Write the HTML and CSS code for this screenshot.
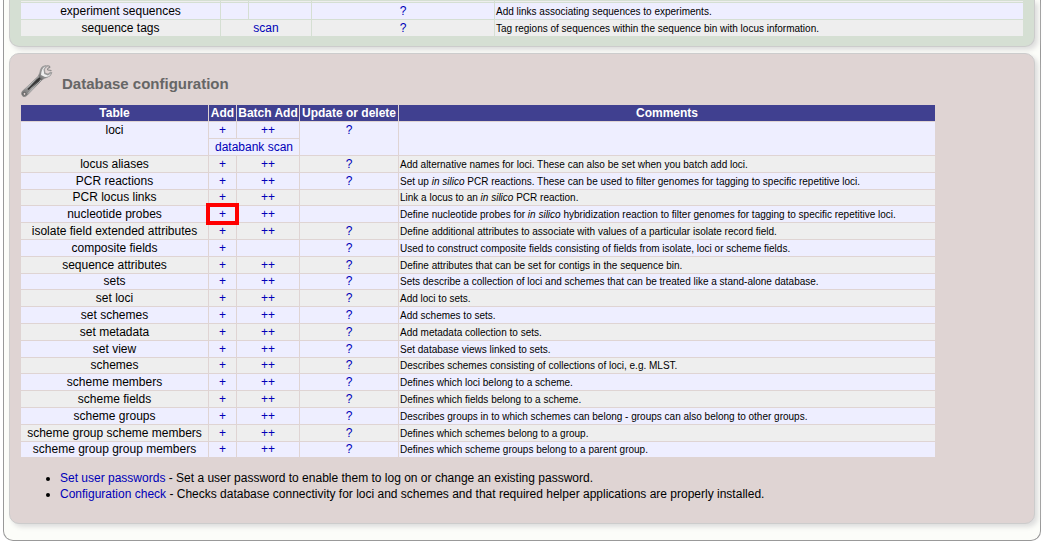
FILE: index.html
```
<!DOCTYPE html>
<html lang="en">
<head>
<meta charset="utf-8">
<title>Database curation</title>
<link rel="stylesheet" href="styles.css">
</head>
<body>
<main class="page">
<section class="panel sequences">
<table class="data full">
<colgroup><col class="c-name-wide"><col class="c-add"><col class="c-batch"><col class="c-update-wide"><col></colgroup>
<tbody>
<tr class="cut"><td></td><td></td><td></td><td></td><td></td></tr>
<tr class="alt"><td>experiment sequences</td><td></td><td></td><td><a href="#">?</a></td><td class="comment">Add links associating sequences to experiments.</td></tr>
<tr><td>sequence tags</td><td colspan="2"><a href="#">scan</a></td><td><a href="#">?</a></td><td class="comment">Tag regions of sequences within the sequence bin with locus information.</td></tr>
</tbody>
</table>
</section>
<section class="panel config">
<header class="heading">
<svg class="wrench" viewBox="0 0 32 34" aria-hidden="true">
<defs><linearGradient id="steel" gradientUnits="userSpaceOnUse" x1="2" y1="31" x2="28" y2="4"><stop offset="0" stop-color="#777"/><stop offset=".3" stop-color="#999"/><stop offset=".55" stop-color="#444"/><stop offset=".7" stop-color="#888"/><stop offset="1" stop-color="#aaa"/></linearGradient></defs>
<path d="M1 27.500L17 12.500Q19 9 19.500 5.500Q20.500 1.800 25 1.500L26 2.500L23.500 5L24 9L27 10L29.500 8L31 8.500Q30 12.500 26 13.500Q23 14 21 16L6.500 31Q4.500 33.500 2 32.500Q-.5 30 1 27.500Z" fill="url(#steel)" stroke="#888" stroke-width=".5"/>
<path d="M20 11Q20.500 4 24.500 2.200L22.500 5.500L23.300 10L27 11.500L30 9.500Q28.500 13 24 13Z" fill="#eee"/>
<path d="M25.500 1.800L28.500 2L29 3.500L27 4L26.500 6L30.500 6.500" fill="none" stroke="#888" stroke-width="1"/>
<path d="M7 25.500L19 14" stroke="#333" stroke-width="1.600"/>
<path d="M4.500 25L18 12.500" stroke="#bbb" stroke-width="1"/>
<path d="M7 29.500L20 16" stroke="#ccc" stroke-width=".8"/>
<circle cx="3.500" cy="29.900" r="1.500" fill="#dfd4d3" stroke="#555" stroke-width=".8"/>
</svg>
<h2>Database configuration</h2>
</header>
<table class="data">
<colgroup><col class="c-name"><col class="c-add"><col class="c-batch"><col class="c-update"><col class="c-comments"></colgroup>
<thead><tr><th>Table</th><th>Add</th><th>Batch Add</th><th>Update or delete</th><th>Comments</th></tr></thead>
<tbody>
<tr class="alt"><td rowspan="2">loci</td><td><a href="#">+</a></td><td><a href="#">++</a></td><td rowspan="2"><a href="#">?</a></td><td rowspan="2" class="comment"></td></tr>
<tr class="alt"><td colspan="2"><a href="#">databank scan</a></td></tr>
<tr><td>locus aliases</td><td><a href="#">+</a></td><td><a href="#">++</a></td><td><a href="#">?</a></td><td class="comment">Add alternative names for loci. These can also be set when you batch add loci.</td></tr>
<tr class="alt"><td>PCR reactions</td><td><a href="#">+</a></td><td><a href="#">++</a></td><td><a href="#">?</a></td><td class="comment">Set up <i>in silico</i> PCR reactions. These can be used to filter genomes for tagging to specific repetitive loci.</td></tr>
<tr><td>PCR locus links</td><td><a href="#">+</a></td><td><a href="#">++</a></td><td></td><td class="comment">Link a locus to an <i>in silico</i> PCR reaction.</td></tr>
<tr class="alt"><td>nucleotide probes</td><td class="marked"><a href="#">+</a></td><td><a href="#">++</a></td><td></td><td class="comment">Define nucleotide probes for <i>in silico</i> hybridization reaction to filter genomes for tagging to specific repetitive loci.</td></tr>
<tr><td>isolate field extended attributes</td><td><a href="#">+</a></td><td><a href="#">++</a></td><td><a href="#">?</a></td><td class="comment">Define additional attributes to associate with values of a particular isolate record field.</td></tr>
<tr class="alt"><td>composite fields</td><td><a href="#">+</a></td><td></td><td><a href="#">?</a></td><td class="comment">Used to construct composite fields consisting of fields from isolate, loci or scheme fields.</td></tr>
<tr><td>sequence attributes</td><td><a href="#">+</a></td><td><a href="#">++</a></td><td><a href="#">?</a></td><td class="comment">Define attributes that can be set for contigs in the sequence bin.</td></tr>
<tr class="alt"><td>sets</td><td><a href="#">+</a></td><td><a href="#">++</a></td><td><a href="#">?</a></td><td class="comment">Sets describe a collection of loci and schemes that can be treated like a stand-alone database.</td></tr>
<tr><td>set loci</td><td><a href="#">+</a></td><td><a href="#">++</a></td><td><a href="#">?</a></td><td class="comment">Add loci to sets.</td></tr>
<tr class="alt"><td>set schemes</td><td><a href="#">+</a></td><td><a href="#">++</a></td><td><a href="#">?</a></td><td class="comment">Add schemes to sets.</td></tr>
<tr><td>set metadata</td><td><a href="#">+</a></td><td><a href="#">++</a></td><td><a href="#">?</a></td><td class="comment">Add metadata collection to sets.</td></tr>
<tr class="alt"><td>set view</td><td><a href="#">+</a></td><td><a href="#">++</a></td><td><a href="#">?</a></td><td class="comment">Set database views linked to sets.</td></tr>
<tr><td>schemes</td><td><a href="#">+</a></td><td><a href="#">++</a></td><td><a href="#">?</a></td><td class="comment">Describes schemes consisting of collections of loci, e.g. MLST.</td></tr>
<tr class="alt"><td>scheme members</td><td><a href="#">+</a></td><td><a href="#">++</a></td><td><a href="#">?</a></td><td class="comment">Defines which loci belong to a scheme.</td></tr>
<tr><td>scheme fields</td><td><a href="#">+</a></td><td><a href="#">++</a></td><td><a href="#">?</a></td><td class="comment">Defines which fields belong to a scheme.</td></tr>
<tr class="alt"><td>scheme groups</td><td><a href="#">+</a></td><td><a href="#">++</a></td><td><a href="#">?</a></td><td class="comment">Describes groups in to which schemes can belong - groups can also belong to other groups.</td></tr>
<tr><td>scheme group scheme members</td><td><a href="#">+</a></td><td><a href="#">++</a></td><td><a href="#">?</a></td><td class="comment">Defines which schemes belong to a group.</td></tr>
<tr class="alt"><td>scheme group group members</td><td><a href="#">+</a></td><td><a href="#">++</a></td><td><a href="#">?</a></td><td class="comment">Defines which scheme groups belong to a parent group.</td></tr>
</tbody>
</table>
<ul class="tools">
<li><a href="#">Set user passwords</a> - Set a user password to enable them to log on or change an existing password.</li>
<li><a href="#">Configuration check</a> - Checks database connectivity for loci and schemes and that required helper applications are properly installed.</li>
</ul>
</section>
</main>
</body>
</html>
```
FILE: styles.css
```
body {
  margin: 0;
  background: #fff;
  color: #000;
  font: 12px/16px "Liberation Sans", Arial, sans-serif;
}
a {
  color: #0000b8;
  text-decoration: none;
}
.page {
  margin: 0 3px;
  padding: 0 5px 16px;
  border: 1px solid #999;
  border-top: 0;
  border-radius: 0 0 10px 10px;
  background: #fcfdf9;
}
.panel {
  border: 1px solid #ccc;
  border-radius: 10px;
  box-shadow: 3px 3px 5px #ddd;
}
.sequences {
  padding: 0 10px 9px;
  border-top: 0;
  border-radius: 0 0 10px 10px;
  background: #d5dfd3;
}
.config {
  margin-top: 6px;
  padding: 10px 10px 21px;
  background: #dfd4d3;
}
.heading {
  display: flex;
  align-items: center;
  gap: 9px;
  padding-left: 1px;
  margin-bottom: 6px;
}
.wrench {
  width: 32px;
  height: 34px;
}
h2 {
  margin: 0;
  padding-top: 6px;
  color: #666;
  font-size: 15px;
  line-height: 20px;
}
.data {
  table-layout: fixed;
  width: 916px;
  max-width: 100%;
  border-spacing: 1px;
}
.full {
  width: 100%;
}
.c-name { width: 187px; }
.c-name-wide { width: 199px; }
.c-add { width: 27px; }
.c-batch { width: 62px; }
.c-update { width: 98px; }
.c-update-wide { width: 182px; }
th, td {
  height: 16px;
  padding: 0;
  background: #eee;
  line-height: 16px;
  text-align: center;
  vertical-align: top;
  white-space: nowrap;
}
th {
  background: #404090;
  color: #fff;
}
.alt td {
  background: #eef;
}
.config tbody tr:nth-child(5n) td {
  height: 15px;
  line-height: 15px;
}
.cut td {
  height: 1px;
}
.data .comment {
  padding: 0 1px;
  font-size: 10px;
  line-height: 15px;
  text-align: left;
  vertical-align: middle;
}
.marked {
  outline: 4px solid #f00;
  outline-offset: -1px;
}
.tools {
  margin: 12px 0 0;
  padding-left: 40px;
}
```
